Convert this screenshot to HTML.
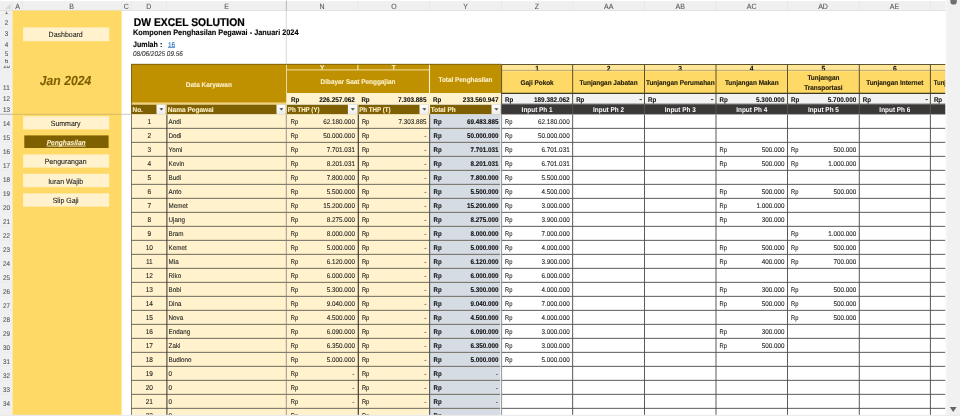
<!DOCTYPE html>
<html lang="id"><head><meta charset="utf-8"><title>DW EXCEL SOLUTION - Penghasilan</title>
<style>
html,body{margin:0;padding:0;background:#fff;overflow:hidden}
body{width:960px;height:416px}
svg{display:block;font-family:"Liberation Sans",sans-serif;will-change:transform;transform:translateZ(0)}
text{white-space:pre}
</style></head><body>
<svg width="960" height="416" viewBox="0 0 960 416" text-rendering="geometricPrecision">
<rect x="0.00" y="0.00" width="960.00" height="416.00" fill="#ffffff" />
<rect x="0.00" y="1.10" width="945.70" height="9.30" fill="#F0F0F0" />
<rect x="0.00" y="10.50" width="12.50" height="405.50" fill="#F0F0F0" />
<line x1="0.00" y1="10.40" x2="945.70" y2="10.40" stroke="#cfcfcf" stroke-width="0.6" />
<polygon points="10.9,3.4 10.9,9.1 5.0,9.1" fill="#d9d9d9"/>
<rect x="12.50" y="10.50" width="109.10" height="405.50" fill="#FFD966" />
<text transform="translate(17.50 8.75) scale(0.92 1)" font-size="7.63" text-anchor="middle" fill="#555555"  stroke="#555555" stroke-width="0.09">A</text>
<text transform="translate(71.50 8.75) scale(0.92 1)" font-size="7.63" text-anchor="middle" fill="#555555"  stroke="#555555" stroke-width="0.09">B</text>
<text transform="translate(126.30 8.75) scale(0.92 1)" font-size="7.63" text-anchor="middle" fill="#555555"  stroke="#555555" stroke-width="0.09">C</text>
<text transform="translate(148.70 8.75) scale(0.92 1)" font-size="7.63" text-anchor="middle" fill="#555555"  stroke="#555555" stroke-width="0.09">D</text>
<text transform="translate(226.50 8.75) scale(0.92 1)" font-size="7.63" text-anchor="middle" fill="#555555"  stroke="#555555" stroke-width="0.09">E</text>
<text transform="translate(322.00 8.75) scale(0.92 1)" font-size="7.63" text-anchor="middle" fill="#555555"  stroke="#555555" stroke-width="0.09">N</text>
<text transform="translate(394.00 8.75) scale(0.92 1)" font-size="7.63" text-anchor="middle" fill="#555555"  stroke="#555555" stroke-width="0.09">O</text>
<text transform="translate(465.50 8.75) scale(0.92 1)" font-size="7.63" text-anchor="middle" fill="#555555"  stroke="#555555" stroke-width="0.09">Y</text>
<text transform="translate(537.00 8.75) scale(0.92 1)" font-size="7.63" text-anchor="middle" fill="#555555"  stroke="#555555" stroke-width="0.09">Z</text>
<text transform="translate(608.70 8.75) scale(0.92 1)" font-size="7.63" text-anchor="middle" fill="#555555"  stroke="#555555" stroke-width="0.09">AA</text>
<text transform="translate(680.20 8.75) scale(0.92 1)" font-size="7.63" text-anchor="middle" fill="#555555"  stroke="#555555" stroke-width="0.09">AB</text>
<text transform="translate(751.60 8.75) scale(0.92 1)" font-size="7.63" text-anchor="middle" fill="#555555"  stroke="#555555" stroke-width="0.09">AC</text>
<text transform="translate(823.00 8.75) scale(0.92 1)" font-size="7.63" text-anchor="middle" fill="#555555"  stroke="#555555" stroke-width="0.09">AD</text>
<text transform="translate(894.50 8.75) scale(0.92 1)" font-size="7.63" text-anchor="middle" fill="#555555"  stroke="#555555" stroke-width="0.09">AE</text>
<line x1="12.50" y1="1.50" x2="12.50" y2="10.20" stroke="#e2e2e2" stroke-width="0.6" />
<line x1="22.50" y1="1.50" x2="22.50" y2="10.20" stroke="#e2e2e2" stroke-width="0.6" />
<line x1="121.70" y1="1.50" x2="121.70" y2="10.20" stroke="#e2e2e2" stroke-width="0.6" />
<line x1="131.20" y1="1.50" x2="131.20" y2="10.20" stroke="#e2e2e2" stroke-width="0.6" />
<line x1="166.50" y1="1.50" x2="166.50" y2="10.20" stroke="#e2e2e2" stroke-width="0.6" />
<line x1="286.50" y1="1.50" x2="286.50" y2="10.20" stroke="#e2e2e2" stroke-width="0.6" />
<line x1="357.90" y1="1.50" x2="357.90" y2="10.20" stroke="#e2e2e2" stroke-width="0.6" />
<line x1="429.50" y1="1.50" x2="429.50" y2="10.20" stroke="#e2e2e2" stroke-width="0.6" />
<line x1="501.60" y1="1.50" x2="501.60" y2="10.20" stroke="#e2e2e2" stroke-width="0.6" />
<line x1="572.65" y1="1.50" x2="572.65" y2="10.20" stroke="#e2e2e2" stroke-width="0.6" />
<line x1="644.50" y1="1.50" x2="644.50" y2="10.20" stroke="#e2e2e2" stroke-width="0.6" />
<line x1="716.00" y1="1.50" x2="716.00" y2="10.20" stroke="#e2e2e2" stroke-width="0.6" />
<line x1="787.50" y1="1.50" x2="787.50" y2="10.20" stroke="#e2e2e2" stroke-width="0.6" />
<line x1="859.30" y1="1.50" x2="859.30" y2="10.20" stroke="#e2e2e2" stroke-width="0.6" />
<line x1="930.40" y1="1.50" x2="930.40" y2="10.20" stroke="#e2e2e2" stroke-width="0.6" />
<text transform="translate(6.40 24.87) scale(0.92 1)" font-size="6.87" text-anchor="middle" fill="#555555"  stroke="#555555" stroke-width="0.09">2</text>
<text transform="translate(6.40 35.77) scale(0.92 1)" font-size="6.87" text-anchor="middle" fill="#555555"  stroke="#555555" stroke-width="0.09">3</text>
<text transform="translate(6.40 46.87) scale(0.92 1)" font-size="6.87" text-anchor="middle" fill="#555555"  stroke="#555555" stroke-width="0.09">4</text>
<text transform="translate(6.40 56.07) scale(0.92 1)" font-size="6.87" text-anchor="middle" fill="#555555"  stroke="#555555" stroke-width="0.09">5</text>
<text transform="translate(6.40 89.77) scale(0.92 1)" font-size="6.87" text-anchor="middle" fill="#555555"  stroke="#555555" stroke-width="0.09">11</text>
<text transform="translate(6.40 101.27) scale(0.92 1)" font-size="6.87" text-anchor="middle" fill="#555555"  stroke="#555555" stroke-width="0.09">12</text>
<text transform="translate(6.40 111.67) scale(0.92 1)" font-size="6.87" text-anchor="middle" fill="#555555"  stroke="#555555" stroke-width="0.09">13</text>
<text transform="translate(6.40 125.67) scale(0.92 1)" font-size="6.87" text-anchor="middle" fill="#555555"  stroke="#555555" stroke-width="0.09">14</text>
<text transform="translate(6.40 139.67) scale(0.92 1)" font-size="6.87" text-anchor="middle" fill="#555555"  stroke="#555555" stroke-width="0.09">15</text>
<text transform="translate(6.40 153.67) scale(0.92 1)" font-size="6.87" text-anchor="middle" fill="#555555"  stroke="#555555" stroke-width="0.09">16</text>
<text transform="translate(6.40 167.67) scale(0.92 1)" font-size="6.87" text-anchor="middle" fill="#555555"  stroke="#555555" stroke-width="0.09">17</text>
<text transform="translate(6.40 181.67) scale(0.92 1)" font-size="6.87" text-anchor="middle" fill="#555555"  stroke="#555555" stroke-width="0.09">18</text>
<text transform="translate(6.40 195.67) scale(0.92 1)" font-size="6.87" text-anchor="middle" fill="#555555"  stroke="#555555" stroke-width="0.09">19</text>
<text transform="translate(6.40 209.67) scale(0.92 1)" font-size="6.87" text-anchor="middle" fill="#555555"  stroke="#555555" stroke-width="0.09">20</text>
<text transform="translate(6.40 223.67) scale(0.92 1)" font-size="6.87" text-anchor="middle" fill="#555555"  stroke="#555555" stroke-width="0.09">21</text>
<text transform="translate(6.40 237.67) scale(0.92 1)" font-size="6.87" text-anchor="middle" fill="#555555"  stroke="#555555" stroke-width="0.09">22</text>
<text transform="translate(6.40 251.67) scale(0.92 1)" font-size="6.87" text-anchor="middle" fill="#555555"  stroke="#555555" stroke-width="0.09">23</text>
<text transform="translate(6.40 265.67) scale(0.92 1)" font-size="6.87" text-anchor="middle" fill="#555555"  stroke="#555555" stroke-width="0.09">24</text>
<text transform="translate(6.40 279.67) scale(0.92 1)" font-size="6.87" text-anchor="middle" fill="#555555"  stroke="#555555" stroke-width="0.09">25</text>
<text transform="translate(6.40 293.67) scale(0.92 1)" font-size="6.87" text-anchor="middle" fill="#555555"  stroke="#555555" stroke-width="0.09">26</text>
<text transform="translate(6.40 307.67) scale(0.92 1)" font-size="6.87" text-anchor="middle" fill="#555555"  stroke="#555555" stroke-width="0.09">27</text>
<text transform="translate(6.40 321.67) scale(0.92 1)" font-size="6.87" text-anchor="middle" fill="#555555"  stroke="#555555" stroke-width="0.09">28</text>
<text transform="translate(6.40 335.67) scale(0.92 1)" font-size="6.87" text-anchor="middle" fill="#555555"  stroke="#555555" stroke-width="0.09">29</text>
<text transform="translate(6.40 349.67) scale(0.92 1)" font-size="6.87" text-anchor="middle" fill="#555555"  stroke="#555555" stroke-width="0.09">30</text>
<text transform="translate(6.40 363.67) scale(0.92 1)" font-size="6.87" text-anchor="middle" fill="#555555"  stroke="#555555" stroke-width="0.09">31</text>
<text transform="translate(6.40 377.67) scale(0.92 1)" font-size="6.87" text-anchor="middle" fill="#555555"  stroke="#555555" stroke-width="0.09">32</text>
<text transform="translate(6.40 391.67) scale(0.92 1)" font-size="6.87" text-anchor="middle" fill="#555555"  stroke="#555555" stroke-width="0.09">33</text>
<text transform="translate(6.40 405.67) scale(0.92 1)" font-size="6.87" text-anchor="middle" fill="#555555"  stroke="#555555" stroke-width="0.09">34</text>
<clipPath id="c1"><rect x="0" y="11.5" width="12.5" height="5"/></clipPath>
<clipPath id="c6"><rect x="0" y="59.3" width="12.5" height="6"/></clipPath>
<clipPath id="c10"><rect x="0" y="65.7" width="12.5" height="6"/></clipPath>
<g clip-path="url(#c1)"><text transform="translate(6.40 14.20) scale(0.92 1)" font-size="6.87" text-anchor="middle" fill="#555555"  stroke="#555555" stroke-width="0.09">1</text></g>
<g clip-path="url(#c6)"><text transform="translate(6.40 62.70) scale(0.92 1)" font-size="6.87" text-anchor="middle" fill="#555555"  stroke="#555555" stroke-width="0.09">6</text></g>
<g clip-path="url(#c10)"><text transform="translate(6.40 68.00) scale(0.92 1)" font-size="6.87" text-anchor="middle" fill="#555555"  stroke="#555555" stroke-width="0.09">10</text></g>
<line x1="0.00" y1="14.80" x2="12.50" y2="14.80" stroke="#e6e6e6" stroke-width="0.5" />
<line x1="0.00" y1="27.60" x2="12.50" y2="27.60" stroke="#e6e6e6" stroke-width="0.5" />
<line x1="0.00" y1="38.60" x2="12.50" y2="38.60" stroke="#e6e6e6" stroke-width="0.5" />
<line x1="0.00" y1="49.30" x2="12.50" y2="49.30" stroke="#e6e6e6" stroke-width="0.5" />
<line x1="0.00" y1="57.40" x2="12.50" y2="57.40" stroke="#e6e6e6" stroke-width="0.5" />
<line x1="0.00" y1="63.30" x2="12.50" y2="63.30" stroke="#e6e6e6" stroke-width="0.5" />
<line x1="0.00" y1="68.60" x2="12.50" y2="68.60" stroke="#e6e6e6" stroke-width="0.5" />
<line x1="0.00" y1="93.00" x2="12.50" y2="93.00" stroke="#e6e6e6" stroke-width="0.5" />
<line x1="0.00" y1="104.00" x2="12.50" y2="104.00" stroke="#e6e6e6" stroke-width="0.5" />
<line x1="0.00" y1="114.20" x2="12.50" y2="114.20" stroke="#e6e6e6" stroke-width="0.5" />
<line x1="0.00" y1="128.20" x2="12.50" y2="128.20" stroke="#e6e6e6" stroke-width="0.5" />
<line x1="0.00" y1="142.20" x2="12.50" y2="142.20" stroke="#e6e6e6" stroke-width="0.5" />
<line x1="0.00" y1="156.20" x2="12.50" y2="156.20" stroke="#e6e6e6" stroke-width="0.5" />
<line x1="0.00" y1="170.20" x2="12.50" y2="170.20" stroke="#e6e6e6" stroke-width="0.5" />
<line x1="0.00" y1="184.20" x2="12.50" y2="184.20" stroke="#e6e6e6" stroke-width="0.5" />
<line x1="0.00" y1="198.20" x2="12.50" y2="198.20" stroke="#e6e6e6" stroke-width="0.5" />
<line x1="0.00" y1="212.20" x2="12.50" y2="212.20" stroke="#e6e6e6" stroke-width="0.5" />
<line x1="0.00" y1="226.20" x2="12.50" y2="226.20" stroke="#e6e6e6" stroke-width="0.5" />
<line x1="0.00" y1="240.20" x2="12.50" y2="240.20" stroke="#e6e6e6" stroke-width="0.5" />
<line x1="0.00" y1="254.20" x2="12.50" y2="254.20" stroke="#e6e6e6" stroke-width="0.5" />
<line x1="0.00" y1="268.20" x2="12.50" y2="268.20" stroke="#e6e6e6" stroke-width="0.5" />
<line x1="0.00" y1="282.20" x2="12.50" y2="282.20" stroke="#e6e6e6" stroke-width="0.5" />
<line x1="0.00" y1="296.20" x2="12.50" y2="296.20" stroke="#e6e6e6" stroke-width="0.5" />
<line x1="0.00" y1="310.20" x2="12.50" y2="310.20" stroke="#e6e6e6" stroke-width="0.5" />
<line x1="0.00" y1="324.20" x2="12.50" y2="324.20" stroke="#e6e6e6" stroke-width="0.5" />
<line x1="0.00" y1="338.20" x2="12.50" y2="338.20" stroke="#e6e6e6" stroke-width="0.5" />
<line x1="0.00" y1="352.20" x2="12.50" y2="352.20" stroke="#e6e6e6" stroke-width="0.5" />
<line x1="0.00" y1="366.20" x2="12.50" y2="366.20" stroke="#e6e6e6" stroke-width="0.5" />
<line x1="0.00" y1="380.20" x2="12.50" y2="380.20" stroke="#e6e6e6" stroke-width="0.5" />
<line x1="0.00" y1="394.20" x2="12.50" y2="394.20" stroke="#e6e6e6" stroke-width="0.5" />
<line x1="0.00" y1="408.20" x2="12.50" y2="408.20" stroke="#e6e6e6" stroke-width="0.5" />
<rect x="23.10" y="27.40" width="86.10" height="13.80" fill="#FFF2CC" />
<text transform="translate(65.65 37.23) scale(0.92 1)" font-size="7.58" text-anchor="middle" fill="#1c1c1c"  stroke="#1c1c1c" stroke-width="0.09">Dashboard</text>
<rect x="23.10" y="116.30" width="86.10" height="13.10" fill="#FFF2CC" />
<text transform="translate(65.65 126.18) scale(0.92 1)" font-size="7.58" text-anchor="middle" fill="#1c1c1c"  stroke="#1c1c1c" stroke-width="0.09">Summary</text>
<rect x="24.30" y="135.40" width="84.30" height="12.60" fill="#7F6000" />
<text transform="translate(66.15 144.69) scale(0.92 1)" font-size="7.19" text-anchor="middle" font-weight="bold" font-style="italic" fill="#FFF2CC" text-decoration="underline" stroke="#FFF2CC" stroke-width="0.09">Penghasilan</text>
<rect x="23.10" y="154.40" width="86.10" height="13.20" fill="#FFF2CC" />
<text transform="translate(65.65 164.13) scale(0.92 1)" font-size="7.58" text-anchor="middle" fill="#1c1c1c"  stroke="#1c1c1c" stroke-width="0.09">Pengurangan</text>
<rect x="23.10" y="173.80" width="86.10" height="13.40" fill="#FFF2CC" />
<text transform="translate(65.65 183.53) scale(0.92 1)" font-size="7.58" text-anchor="middle" fill="#1c1c1c"  stroke="#1c1c1c" stroke-width="0.09">Iuran Wajib</text>
<rect x="23.10" y="193.40" width="86.10" height="13.20" fill="#FFF2CC" />
<text transform="translate(65.65 202.93) scale(0.92 1)" font-size="7.58" text-anchor="middle" fill="#1c1c1c"  stroke="#1c1c1c" stroke-width="0.09">Slip Gaji</text>
<text transform="translate(65.50 84.75) scale(0.92 1)" font-size="13.19" text-anchor="middle" font-weight="bold" font-style="italic" fill="#7F6000"  stroke="#7F6000" stroke-width="0.09">Jan 2024</text>
<text transform="translate(133.80 25.80) scale(0.92 1)" font-size="11.28" font-weight="bold" fill="#000" stroke="#000" stroke-width="0.22">DW EXCEL SOLUTION</text>
<text transform="translate(133.00 35.40) scale(0.92 1)" font-size="7.96" font-weight="bold" fill="#000" stroke="#000" stroke-width="0.12">Komponen Penghasilan Pegawai - Januari 2024</text>
<text transform="translate(133.00 46.60) scale(0.92 1)" font-size="7.74" font-weight="bold" fill="#000" stroke="#000" stroke-width="0.12">Jumlah :</text>
<text transform="translate(168.00 46.60) scale(0.92 1)" font-size="6.98" fill="#1f6fc0"  stroke="#1f6fc0" stroke-width="0.09">16</text>
<line x1="168.00" y1="47.50" x2="175.00" y2="47.50" stroke="#2a72c4" stroke-width="0.7" />
<text transform="translate(133.00 55.80) scale(0.92 1)" font-size="6.98" font-style="italic" fill="#333"  stroke="#333" stroke-width="0.09">08/06/2025 09.56</text>
<rect x="131.20" y="64.00" width="155.30" height="38.70" fill="#BF9000" />
<text transform="translate(208.85 87.11) scale(0.92 1)" font-size="6.98" text-anchor="middle" font-weight="bold" fill="#FFF2CC"  stroke="#FFF2CC" stroke-width="0.09">Data Karyawan</text>
<rect x="286.50" y="64.00" width="143.00" height="29.00" fill="#BF9000" />
<text transform="translate(358.00 84.11) scale(0.92 1)" font-size="6.98" text-anchor="middle" font-weight="bold" fill="#FFF2CC"  stroke="#FFF2CC" stroke-width="0.09">Dibayar Saat Penggajian</text>
<rect x="429.50" y="64.00" width="72.00" height="29.00" fill="#BF9000" />
<text transform="translate(465.50 81.89) scale(0.92 1)" font-size="6.92" text-anchor="middle" font-weight="bold" fill="#FFF2CC"  stroke="#FFF2CC" stroke-width="0.09">Total Penghasilan</text>
<clipPath id="cy"><rect x="286" y="64.6" width="144" height="4.9"/></clipPath>
<g clip-path="url(#cy)"><text transform="translate(322.20 70.30) scale(0.92 1)" font-size="7.09" text-anchor="middle" font-weight="bold" fill="#FFF2CC"  stroke="#FFF2CC" stroke-width="0.09">Y</text></g>
<g clip-path="url(#cy)"><text transform="translate(393.70 70.30) scale(0.92 1)" font-size="7.09" text-anchor="middle" font-weight="bold" fill="#FFF2CC"  stroke="#FFF2CC" stroke-width="0.09">T</text></g>
<line x1="286.50" y1="69.90" x2="429.50" y2="69.90" stroke="#FFF2CC" stroke-width="0.8" />
<line x1="357.90" y1="64.50" x2="357.90" y2="69.90" stroke="#FFF2CC" stroke-width="1.0" />
<rect x="286.50" y="93.00" width="215.00" height="11.00" fill="#FFF2CC" />
<rect x="131.20" y="102.80" width="155.30" height="2.00" fill="#EFD27A" />
<rect x="131.20" y="104.70" width="370.30" height="9.70" fill="#7F6000" />
<line x1="429.50" y1="64.30" x2="429.50" y2="113.80" stroke="#FFF2CC" stroke-width="1.1" />
<line x1="286.50" y1="64.30" x2="286.50" y2="113.80" stroke="#E9DDB0" stroke-width="0.9" />
<line x1="357.90" y1="93.00" x2="357.90" y2="113.80" stroke="#FFF2CC" stroke-width="0.9" />
<line x1="166.50" y1="104.20" x2="166.50" y2="113.80" stroke="#DCCB94" stroke-width="0.9" />
<line x1="131.20" y1="64.30" x2="501.50" y2="64.30" stroke="#6f5608" stroke-width="0.8" />
<line x1="131.50" y1="64.00" x2="131.50" y2="113.80" stroke="#6f5608" stroke-width="0.8" />
<rect x="501.50" y="64.60" width="444.20" height="28.80" fill="#FFD966" />
<rect x="501.50" y="93.40" width="444.20" height="10.80" fill="#F2F2F2" />
<rect x="501.50" y="64.60" width="444.20" height="5.80" fill="#FFE699" />
<rect x="501.50" y="104.20" width="444.20" height="10.10" fill="#3B3838" />
<line x1="501.50" y1="64.50" x2="945.70" y2="64.50" stroke="#4a4220" stroke-width="0.9" />
<line x1="501.50" y1="70.40" x2="945.70" y2="70.40" stroke="#8c7a3a" stroke-width="0.8" />
<line x1="501.50" y1="70.90" x2="945.70" y2="70.90" stroke="#FFF2CC" stroke-width="0.5" />
<line x1="501.50" y1="93.40" x2="945.70" y2="93.40" stroke="#3f3a22" stroke-width="1.1" />
<line x1="501.50" y1="103.90" x2="945.70" y2="103.90" stroke="#6a6a6a" stroke-width="0.7" />
<clipPath id="cn"><rect x="501" y="65.0" width="445" height="5.2"/></clipPath>
<g clip-path="url(#cn)"><text transform="translate(537.12 71.20) scale(0.92 1)" font-size="7.41" text-anchor="middle" font-weight="bold" fill="#111"  stroke="#111" stroke-width="0.09">1</text></g>
<text transform="translate(537.12 84.81) scale(0.92 1)" font-size="6.98" text-anchor="middle" font-weight="bold" fill="#1e1a08" stroke="#1e1a08" stroke-width="0.12">Gaji Pokok</text>
<text transform="translate(537.12 112.11) scale(0.92 1)" font-size="6.98" text-anchor="middle" font-weight="bold" fill="#ffffff" >Input Ph 1</text>
<g clip-path="url(#cn)"><text transform="translate(608.58 71.20) scale(0.92 1)" font-size="7.41" text-anchor="middle" font-weight="bold" fill="#111"  stroke="#111" stroke-width="0.09">2</text></g>
<text transform="translate(608.58 84.81) scale(0.92 1)" font-size="6.98" text-anchor="middle" font-weight="bold" fill="#1e1a08" stroke="#1e1a08" stroke-width="0.12">Tunjangan Jabatan</text>
<text transform="translate(608.58 112.11) scale(0.92 1)" font-size="6.98" text-anchor="middle" font-weight="bold" fill="#ffffff" >Input Ph 2</text>
<g clip-path="url(#cn)"><text transform="translate(680.25 71.20) scale(0.92 1)" font-size="7.41" text-anchor="middle" font-weight="bold" fill="#111"  stroke="#111" stroke-width="0.09">3</text></g>
<text transform="translate(680.25 84.81) scale(0.92 1)" font-size="6.98" text-anchor="middle" font-weight="bold" fill="#1e1a08" stroke="#1e1a08" stroke-width="0.12">Tunjangan Perumahan</text>
<text transform="translate(680.25 112.11) scale(0.92 1)" font-size="6.98" text-anchor="middle" font-weight="bold" fill="#ffffff" >Input Ph 3</text>
<g clip-path="url(#cn)"><text transform="translate(751.75 71.20) scale(0.92 1)" font-size="7.41" text-anchor="middle" font-weight="bold" fill="#111"  stroke="#111" stroke-width="0.09">4</text></g>
<text transform="translate(751.75 84.81) scale(0.92 1)" font-size="6.98" text-anchor="middle" font-weight="bold" fill="#1e1a08" stroke="#1e1a08" stroke-width="0.12">Tunjangan Makan</text>
<text transform="translate(751.75 112.11) scale(0.92 1)" font-size="6.98" text-anchor="middle" font-weight="bold" fill="#ffffff" >Input Ph 4</text>
<g clip-path="url(#cn)"><text transform="translate(823.40 71.20) scale(0.92 1)" font-size="7.41" text-anchor="middle" font-weight="bold" fill="#111"  stroke="#111" stroke-width="0.09">5</text></g>
<text transform="translate(823.40 79.81) scale(0.92 1)" font-size="6.98" text-anchor="middle" font-weight="bold" fill="#1e1a08" stroke="#1e1a08" stroke-width="0.12">Tunjangan</text>
<text transform="translate(823.40 89.51) scale(0.92 1)" font-size="6.98" text-anchor="middle" font-weight="bold" fill="#1e1a08" stroke="#1e1a08" stroke-width="0.12">Transportasi</text>
<text transform="translate(823.40 112.11) scale(0.92 1)" font-size="6.98" text-anchor="middle" font-weight="bold" fill="#ffffff" >Input Ph 5</text>
<g clip-path="url(#cn)"><text transform="translate(894.85 71.20) scale(0.92 1)" font-size="7.41" text-anchor="middle" font-weight="bold" fill="#111"  stroke="#111" stroke-width="0.09">6</text></g>
<text transform="translate(894.85 84.81) scale(0.92 1)" font-size="6.98" text-anchor="middle" font-weight="bold" fill="#1e1a08" stroke="#1e1a08" stroke-width="0.12">Tunjangan Internet</text>
<text transform="translate(894.85 112.11) scale(0.92 1)" font-size="6.98" text-anchor="middle" font-weight="bold" fill="#ffffff" >Input Ph 6</text>
<clipPath id="caf"><rect x="930.4" y="60" width="15.30" height="60"/></clipPath>
<g clip-path="url(#caf)"><text transform="translate(933.80 84.51) scale(0.86 1)" font-size="6.98" font-weight="bold" fill="#2a2410"  stroke="#2a2410" stroke-width="0.09">Tunjangan</text></g>
<line x1="501.60" y1="64.50" x2="501.60" y2="104.00" stroke="#504a2c" stroke-width="0.95" />
<line x1="501.60" y1="104.00" x2="501.60" y2="113.80" stroke="#5a5858" stroke-width="0.8" />
<line x1="572.65" y1="64.50" x2="572.65" y2="104.00" stroke="#504a2c" stroke-width="0.95" />
<line x1="572.65" y1="104.00" x2="572.65" y2="113.80" stroke="#5a5858" stroke-width="0.8" />
<line x1="644.50" y1="64.50" x2="644.50" y2="104.00" stroke="#504a2c" stroke-width="0.95" />
<line x1="644.50" y1="104.00" x2="644.50" y2="113.80" stroke="#5a5858" stroke-width="0.8" />
<line x1="716.00" y1="64.50" x2="716.00" y2="104.00" stroke="#504a2c" stroke-width="0.95" />
<line x1="716.00" y1="104.00" x2="716.00" y2="113.80" stroke="#5a5858" stroke-width="0.8" />
<line x1="787.50" y1="64.50" x2="787.50" y2="104.00" stroke="#504a2c" stroke-width="0.95" />
<line x1="787.50" y1="104.00" x2="787.50" y2="113.80" stroke="#5a5858" stroke-width="0.8" />
<line x1="859.30" y1="64.50" x2="859.30" y2="104.00" stroke="#504a2c" stroke-width="0.95" />
<line x1="859.30" y1="104.00" x2="859.30" y2="113.80" stroke="#5a5858" stroke-width="0.8" />
<line x1="930.40" y1="64.50" x2="930.40" y2="104.00" stroke="#504a2c" stroke-width="0.95" />
<line x1="930.40" y1="104.00" x2="930.40" y2="113.80" stroke="#5a5858" stroke-width="0.8" />
<text transform="translate(291.00 101.57) scale(0.9 1)" font-size="6.87" font-weight="bold" fill="#111"  stroke="#111" stroke-width="0.09">Rp</text>
<text transform="translate(354.90 101.57) scale(0.935 1)" font-size="6.87" text-anchor="end" font-weight="bold" fill="#111"  stroke="#111" stroke-width="0.09">226.257.062</text>
<text transform="translate(361.40 101.57) scale(0.9 1)" font-size="6.87" font-weight="bold" fill="#111"  stroke="#111" stroke-width="0.09">Rp</text>
<text transform="translate(426.50 101.57) scale(0.935 1)" font-size="6.87" text-anchor="end" font-weight="bold" fill="#111"  stroke="#111" stroke-width="0.09">7.303.885</text>
<text transform="translate(433.00 101.57) scale(0.9 1)" font-size="6.87" font-weight="bold" fill="#111"  stroke="#111" stroke-width="0.09">Rp</text>
<text transform="translate(498.50 101.57) scale(0.935 1)" font-size="6.87" text-anchor="end" font-weight="bold" fill="#111"  stroke="#111" stroke-width="0.09">233.560.947</text>
<text transform="translate(505.10 101.87) scale(0.9 1)" font-size="6.87" font-weight="bold" fill="#111"  stroke="#111" stroke-width="0.09">Rp</text>
<text transform="translate(569.65 101.87) scale(0.935 1)" font-size="6.87" text-anchor="end" font-weight="bold" fill="#111"  stroke="#111" stroke-width="0.09">189.382.062</text>
<text transform="translate(576.15 101.87) scale(0.9 1)" font-size="6.87" font-weight="bold" fill="#111"  stroke="#111" stroke-width="0.09">Rp</text>
<text transform="translate(642.20 102.49) scale(1.0 1)" font-size="8.58" text-anchor="end" fill="#000"  stroke="#000" stroke-width="0.09">-</text>
<text transform="translate(648.00 101.87) scale(0.9 1)" font-size="6.87" font-weight="bold" fill="#111"  stroke="#111" stroke-width="0.09">Rp</text>
<text transform="translate(713.70 102.49) scale(1.0 1)" font-size="8.58" text-anchor="end" fill="#000"  stroke="#000" stroke-width="0.09">-</text>
<text transform="translate(719.50 101.87) scale(0.9 1)" font-size="6.87" font-weight="bold" fill="#111"  stroke="#111" stroke-width="0.09">Rp</text>
<text transform="translate(784.50 101.87) scale(0.935 1)" font-size="6.87" text-anchor="end" font-weight="bold" fill="#111"  stroke="#111" stroke-width="0.09">5.300.000</text>
<text transform="translate(791.00 101.87) scale(0.9 1)" font-size="6.87" font-weight="bold" fill="#111"  stroke="#111" stroke-width="0.09">Rp</text>
<text transform="translate(856.30 101.87) scale(0.935 1)" font-size="6.87" text-anchor="end" font-weight="bold" fill="#111"  stroke="#111" stroke-width="0.09">5.700.000</text>
<text transform="translate(862.80 101.87) scale(0.9 1)" font-size="6.87" font-weight="bold" fill="#111"  stroke="#111" stroke-width="0.09">Rp</text>
<text transform="translate(928.10 102.49) scale(1.0 1)" font-size="8.58" text-anchor="end" fill="#000"  stroke="#000" stroke-width="0.09">-</text>
<text transform="translate(933.90 101.87) scale(0.9 1)" font-size="6.87" font-weight="bold" fill="#111"  stroke="#111" stroke-width="0.09">Rp</text>
<text transform="translate(132.50 112.21) scale(0.92 1)" font-size="6.98" font-weight="bold" fill="#FFF2CC"  stroke="#FFF2CC" stroke-width="0.09">No.</text>
<text transform="translate(167.80 112.21) scale(0.94 1)" font-size="6.98" font-weight="bold" fill="#FFF2CC"  stroke="#FFF2CC" stroke-width="0.09">Nama Pegawai</text>
<text transform="translate(287.80 112.21) scale(0.885 1)" font-size="6.98" font-weight="bold" fill="#FFF2CC"  stroke="#FFF2CC" stroke-width="0.09">Ph THP (Y)</text>
<text transform="translate(359.20 112.21) scale(0.885 1)" font-size="6.98" font-weight="bold" fill="#FFF2CC"  stroke="#FFF2CC" stroke-width="0.09">Ph THP (T)</text>
<text transform="translate(430.80 112.21) scale(0.92 1)" font-size="6.98" font-weight="bold" fill="#FFF2CC"  stroke="#FFF2CC" stroke-width="0.09">Total Ph</text>
<linearGradient id="fb" x1="0" y1="0" x2="0" y2="1"><stop offset="0" stop-color="#ffffff"/><stop offset="1" stop-color="#ececec"/></linearGradient>
<rect x="156.50" y="104.50" width="9.30" height="9.80" fill="url(#fb)" />
<polygon points="159.40,108.3 163.40,108.3 161.40,110.6" fill="#44444c"/>
<rect x="276.50" y="104.50" width="9.30" height="9.80" fill="url(#fb)" />
<polygon points="279.40,108.3 283.40,108.3 281.40,110.6" fill="#44444c"/>
<rect x="347.90" y="104.50" width="9.30" height="9.80" fill="url(#fb)" />
<polygon points="350.80,108.3 354.80,108.3 352.80,110.6" fill="#44444c"/>
<rect x="419.50" y="104.50" width="9.30" height="9.80" fill="url(#fb)" />
<polygon points="422.40,108.3 426.40,108.3 424.40,110.6" fill="#44444c"/>
<rect x="491.50" y="104.50" width="9.30" height="9.80" fill="url(#fb)" />
<polygon points="494.40,108.3 498.40,108.3 496.40,110.6" fill="#44444c"/>
<rect x="131.20" y="114.40" width="298.30" height="301.80" fill="#FFF2CC" />
<rect x="429.50" y="114.40" width="72.00" height="301.80" fill="#D6DCE4" />
<text transform="translate(149.35 124.15) scale(0.92 1)" font-size="7.09" text-anchor="middle" fill="#1a1a1a"  stroke="#1a1a1a" stroke-width="0.09">1</text>
<text transform="translate(168.60 124.05) scale(0.92 1)" font-size="6.81" fill="#1a1a1a"  stroke="#1a1a1a" stroke-width="0.09">Andi</text>
<text transform="translate(290.80 124.03) scale(0.86 1)" font-size="6.76" fill="#1a1a1a"  stroke="#1a1a1a" stroke-width="0.09">Rp</text>
<text transform="translate(354.90 124.03) scale(0.935 1)" font-size="6.76" text-anchor="end" fill="#1a1a1a"  stroke="#1a1a1a" stroke-width="0.09">62.180.000</text>
<text transform="translate(361.90 124.03) scale(0.86 1)" font-size="6.76" fill="#1a1a1a"  stroke="#1a1a1a" stroke-width="0.09">Rp</text>
<text transform="translate(426.50 124.03) scale(0.935 1)" font-size="6.76" text-anchor="end" fill="#1a1a1a"  stroke="#1a1a1a" stroke-width="0.09">7.303.885</text>
<text transform="translate(433.60 124.03) scale(0.9 1)" font-size="6.76" font-weight="bold" fill="#111"  stroke="#111" stroke-width="0.09">Rp</text>
<text transform="translate(498.50 124.03) scale(0.935 1)" font-size="6.76" text-anchor="end" font-weight="bold" fill="#111"  stroke="#111" stroke-width="0.09">69.483.885</text>
<text transform="translate(505.10 124.03) scale(0.86 1)" font-size="6.76" fill="#1a1a1a"  stroke="#1a1a1a" stroke-width="0.09">Rp</text>
<text transform="translate(569.65 124.03) scale(0.935 1)" font-size="6.76" text-anchor="end" fill="#1a1a1a"  stroke="#1a1a1a" stroke-width="0.09">62.180.000</text>
<text transform="translate(149.35 138.15) scale(0.92 1)" font-size="7.09" text-anchor="middle" fill="#1a1a1a"  stroke="#1a1a1a" stroke-width="0.09">2</text>
<text transform="translate(168.60 138.05) scale(0.92 1)" font-size="6.81" fill="#1a1a1a"  stroke="#1a1a1a" stroke-width="0.09">Dodi</text>
<text transform="translate(290.80 138.03) scale(0.86 1)" font-size="6.76" fill="#1a1a1a"  stroke="#1a1a1a" stroke-width="0.09">Rp</text>
<text transform="translate(354.90 138.03) scale(0.935 1)" font-size="6.76" text-anchor="end" fill="#1a1a1a"  stroke="#1a1a1a" stroke-width="0.09">50.000.000</text>
<text transform="translate(361.90 138.03) scale(0.86 1)" font-size="6.76" fill="#1a1a1a"  stroke="#1a1a1a" stroke-width="0.09">Rp</text>
<text transform="translate(426.60 138.03) scale(1.0 1)" font-size="6.76" text-anchor="end" fill="#111"  stroke="#111" stroke-width="0.09">-</text>
<text transform="translate(433.60 138.03) scale(0.9 1)" font-size="6.76" font-weight="bold" fill="#111"  stroke="#111" stroke-width="0.09">Rp</text>
<text transform="translate(498.50 138.03) scale(0.935 1)" font-size="6.76" text-anchor="end" font-weight="bold" fill="#111"  stroke="#111" stroke-width="0.09">50.000.000</text>
<text transform="translate(505.10 138.03) scale(0.86 1)" font-size="6.76" fill="#1a1a1a"  stroke="#1a1a1a" stroke-width="0.09">Rp</text>
<text transform="translate(569.65 138.03) scale(0.935 1)" font-size="6.76" text-anchor="end" fill="#1a1a1a"  stroke="#1a1a1a" stroke-width="0.09">50.000.000</text>
<text transform="translate(149.35 152.15) scale(0.92 1)" font-size="7.09" text-anchor="middle" fill="#1a1a1a"  stroke="#1a1a1a" stroke-width="0.09">3</text>
<text transform="translate(168.60 152.05) scale(0.92 1)" font-size="6.81" fill="#1a1a1a"  stroke="#1a1a1a" stroke-width="0.09">Yomi</text>
<text transform="translate(290.80 152.03) scale(0.86 1)" font-size="6.76" fill="#1a1a1a"  stroke="#1a1a1a" stroke-width="0.09">Rp</text>
<text transform="translate(354.90 152.03) scale(0.935 1)" font-size="6.76" text-anchor="end" fill="#1a1a1a"  stroke="#1a1a1a" stroke-width="0.09">7.701.031</text>
<text transform="translate(361.90 152.03) scale(0.86 1)" font-size="6.76" fill="#1a1a1a"  stroke="#1a1a1a" stroke-width="0.09">Rp</text>
<text transform="translate(426.60 152.03) scale(1.0 1)" font-size="6.76" text-anchor="end" fill="#111"  stroke="#111" stroke-width="0.09">-</text>
<text transform="translate(433.60 152.03) scale(0.9 1)" font-size="6.76" font-weight="bold" fill="#111"  stroke="#111" stroke-width="0.09">Rp</text>
<text transform="translate(498.50 152.03) scale(0.935 1)" font-size="6.76" text-anchor="end" font-weight="bold" fill="#111"  stroke="#111" stroke-width="0.09">7.701.031</text>
<text transform="translate(505.10 152.03) scale(0.86 1)" font-size="6.76" fill="#1a1a1a"  stroke="#1a1a1a" stroke-width="0.09">Rp</text>
<text transform="translate(569.65 152.03) scale(0.935 1)" font-size="6.76" text-anchor="end" fill="#1a1a1a"  stroke="#1a1a1a" stroke-width="0.09">6.701.031</text>
<text transform="translate(719.50 152.03) scale(0.86 1)" font-size="6.76" fill="#1a1a1a"  stroke="#1a1a1a" stroke-width="0.09">Rp</text>
<text transform="translate(784.50 152.03) scale(0.935 1)" font-size="6.76" text-anchor="end" fill="#1a1a1a"  stroke="#1a1a1a" stroke-width="0.09">500.000</text>
<text transform="translate(791.00 152.03) scale(0.86 1)" font-size="6.76" fill="#1a1a1a"  stroke="#1a1a1a" stroke-width="0.09">Rp</text>
<text transform="translate(856.30 152.03) scale(0.935 1)" font-size="6.76" text-anchor="end" fill="#1a1a1a"  stroke="#1a1a1a" stroke-width="0.09">500.000</text>
<text transform="translate(149.35 166.15) scale(0.92 1)" font-size="7.09" text-anchor="middle" fill="#1a1a1a"  stroke="#1a1a1a" stroke-width="0.09">4</text>
<text transform="translate(168.60 166.05) scale(0.92 1)" font-size="6.81" fill="#1a1a1a"  stroke="#1a1a1a" stroke-width="0.09">Kevin</text>
<text transform="translate(290.80 166.03) scale(0.86 1)" font-size="6.76" fill="#1a1a1a"  stroke="#1a1a1a" stroke-width="0.09">Rp</text>
<text transform="translate(354.90 166.03) scale(0.935 1)" font-size="6.76" text-anchor="end" fill="#1a1a1a"  stroke="#1a1a1a" stroke-width="0.09">8.201.031</text>
<text transform="translate(361.90 166.03) scale(0.86 1)" font-size="6.76" fill="#1a1a1a"  stroke="#1a1a1a" stroke-width="0.09">Rp</text>
<text transform="translate(426.60 166.03) scale(1.0 1)" font-size="6.76" text-anchor="end" fill="#111"  stroke="#111" stroke-width="0.09">-</text>
<text transform="translate(433.60 166.03) scale(0.9 1)" font-size="6.76" font-weight="bold" fill="#111"  stroke="#111" stroke-width="0.09">Rp</text>
<text transform="translate(498.50 166.03) scale(0.935 1)" font-size="6.76" text-anchor="end" font-weight="bold" fill="#111"  stroke="#111" stroke-width="0.09">8.201.031</text>
<text transform="translate(505.10 166.03) scale(0.86 1)" font-size="6.76" fill="#1a1a1a"  stroke="#1a1a1a" stroke-width="0.09">Rp</text>
<text transform="translate(569.65 166.03) scale(0.935 1)" font-size="6.76" text-anchor="end" fill="#1a1a1a"  stroke="#1a1a1a" stroke-width="0.09">6.701.031</text>
<text transform="translate(719.50 166.03) scale(0.86 1)" font-size="6.76" fill="#1a1a1a"  stroke="#1a1a1a" stroke-width="0.09">Rp</text>
<text transform="translate(784.50 166.03) scale(0.935 1)" font-size="6.76" text-anchor="end" fill="#1a1a1a"  stroke="#1a1a1a" stroke-width="0.09">500.000</text>
<text transform="translate(791.00 166.03) scale(0.86 1)" font-size="6.76" fill="#1a1a1a"  stroke="#1a1a1a" stroke-width="0.09">Rp</text>
<text transform="translate(856.30 166.03) scale(0.935 1)" font-size="6.76" text-anchor="end" fill="#1a1a1a"  stroke="#1a1a1a" stroke-width="0.09">1.000.000</text>
<text transform="translate(149.35 180.15) scale(0.92 1)" font-size="7.09" text-anchor="middle" fill="#1a1a1a"  stroke="#1a1a1a" stroke-width="0.09">5</text>
<text transform="translate(168.60 180.05) scale(0.92 1)" font-size="6.81" fill="#1a1a1a"  stroke="#1a1a1a" stroke-width="0.09">Budi</text>
<text transform="translate(290.80 180.03) scale(0.86 1)" font-size="6.76" fill="#1a1a1a"  stroke="#1a1a1a" stroke-width="0.09">Rp</text>
<text transform="translate(354.90 180.03) scale(0.935 1)" font-size="6.76" text-anchor="end" fill="#1a1a1a"  stroke="#1a1a1a" stroke-width="0.09">7.800.000</text>
<text transform="translate(361.90 180.03) scale(0.86 1)" font-size="6.76" fill="#1a1a1a"  stroke="#1a1a1a" stroke-width="0.09">Rp</text>
<text transform="translate(426.60 180.03) scale(1.0 1)" font-size="6.76" text-anchor="end" fill="#111"  stroke="#111" stroke-width="0.09">-</text>
<text transform="translate(433.60 180.03) scale(0.9 1)" font-size="6.76" font-weight="bold" fill="#111"  stroke="#111" stroke-width="0.09">Rp</text>
<text transform="translate(498.50 180.03) scale(0.935 1)" font-size="6.76" text-anchor="end" font-weight="bold" fill="#111"  stroke="#111" stroke-width="0.09">7.800.000</text>
<text transform="translate(505.10 180.03) scale(0.86 1)" font-size="6.76" fill="#1a1a1a"  stroke="#1a1a1a" stroke-width="0.09">Rp</text>
<text transform="translate(569.65 180.03) scale(0.935 1)" font-size="6.76" text-anchor="end" fill="#1a1a1a"  stroke="#1a1a1a" stroke-width="0.09">5.500.000</text>
<text transform="translate(149.35 194.15) scale(0.92 1)" font-size="7.09" text-anchor="middle" fill="#1a1a1a"  stroke="#1a1a1a" stroke-width="0.09">6</text>
<text transform="translate(168.60 194.05) scale(0.92 1)" font-size="6.81" fill="#1a1a1a"  stroke="#1a1a1a" stroke-width="0.09">Anto</text>
<text transform="translate(290.80 194.03) scale(0.86 1)" font-size="6.76" fill="#1a1a1a"  stroke="#1a1a1a" stroke-width="0.09">Rp</text>
<text transform="translate(354.90 194.03) scale(0.935 1)" font-size="6.76" text-anchor="end" fill="#1a1a1a"  stroke="#1a1a1a" stroke-width="0.09">5.500.000</text>
<text transform="translate(361.90 194.03) scale(0.86 1)" font-size="6.76" fill="#1a1a1a"  stroke="#1a1a1a" stroke-width="0.09">Rp</text>
<text transform="translate(426.60 194.03) scale(1.0 1)" font-size="6.76" text-anchor="end" fill="#111"  stroke="#111" stroke-width="0.09">-</text>
<text transform="translate(433.60 194.03) scale(0.9 1)" font-size="6.76" font-weight="bold" fill="#111"  stroke="#111" stroke-width="0.09">Rp</text>
<text transform="translate(498.50 194.03) scale(0.935 1)" font-size="6.76" text-anchor="end" font-weight="bold" fill="#111"  stroke="#111" stroke-width="0.09">5.500.000</text>
<text transform="translate(505.10 194.03) scale(0.86 1)" font-size="6.76" fill="#1a1a1a"  stroke="#1a1a1a" stroke-width="0.09">Rp</text>
<text transform="translate(569.65 194.03) scale(0.935 1)" font-size="6.76" text-anchor="end" fill="#1a1a1a"  stroke="#1a1a1a" stroke-width="0.09">4.500.000</text>
<text transform="translate(719.50 194.03) scale(0.86 1)" font-size="6.76" fill="#1a1a1a"  stroke="#1a1a1a" stroke-width="0.09">Rp</text>
<text transform="translate(784.50 194.03) scale(0.935 1)" font-size="6.76" text-anchor="end" fill="#1a1a1a"  stroke="#1a1a1a" stroke-width="0.09">500.000</text>
<text transform="translate(791.00 194.03) scale(0.86 1)" font-size="6.76" fill="#1a1a1a"  stroke="#1a1a1a" stroke-width="0.09">Rp</text>
<text transform="translate(856.30 194.03) scale(0.935 1)" font-size="6.76" text-anchor="end" fill="#1a1a1a"  stroke="#1a1a1a" stroke-width="0.09">500.000</text>
<text transform="translate(149.35 208.15) scale(0.92 1)" font-size="7.09" text-anchor="middle" fill="#1a1a1a"  stroke="#1a1a1a" stroke-width="0.09">7</text>
<text transform="translate(168.60 208.05) scale(0.92 1)" font-size="6.81" fill="#1a1a1a"  stroke="#1a1a1a" stroke-width="0.09">Memet</text>
<text transform="translate(290.80 208.03) scale(0.86 1)" font-size="6.76" fill="#1a1a1a"  stroke="#1a1a1a" stroke-width="0.09">Rp</text>
<text transform="translate(354.90 208.03) scale(0.935 1)" font-size="6.76" text-anchor="end" fill="#1a1a1a"  stroke="#1a1a1a" stroke-width="0.09">15.200.000</text>
<text transform="translate(361.90 208.03) scale(0.86 1)" font-size="6.76" fill="#1a1a1a"  stroke="#1a1a1a" stroke-width="0.09">Rp</text>
<text transform="translate(426.60 208.03) scale(1.0 1)" font-size="6.76" text-anchor="end" fill="#111"  stroke="#111" stroke-width="0.09">-</text>
<text transform="translate(433.60 208.03) scale(0.9 1)" font-size="6.76" font-weight="bold" fill="#111"  stroke="#111" stroke-width="0.09">Rp</text>
<text transform="translate(498.50 208.03) scale(0.935 1)" font-size="6.76" text-anchor="end" font-weight="bold" fill="#111"  stroke="#111" stroke-width="0.09">15.200.000</text>
<text transform="translate(505.10 208.03) scale(0.86 1)" font-size="6.76" fill="#1a1a1a"  stroke="#1a1a1a" stroke-width="0.09">Rp</text>
<text transform="translate(569.65 208.03) scale(0.935 1)" font-size="6.76" text-anchor="end" fill="#1a1a1a"  stroke="#1a1a1a" stroke-width="0.09">3.000.000</text>
<text transform="translate(719.50 208.03) scale(0.86 1)" font-size="6.76" fill="#1a1a1a"  stroke="#1a1a1a" stroke-width="0.09">Rp</text>
<text transform="translate(784.50 208.03) scale(0.935 1)" font-size="6.76" text-anchor="end" fill="#1a1a1a"  stroke="#1a1a1a" stroke-width="0.09">1.000.000</text>
<text transform="translate(149.35 222.15) scale(0.92 1)" font-size="7.09" text-anchor="middle" fill="#1a1a1a"  stroke="#1a1a1a" stroke-width="0.09">8</text>
<text transform="translate(168.60 222.05) scale(0.92 1)" font-size="6.81" fill="#1a1a1a"  stroke="#1a1a1a" stroke-width="0.09">Ujang</text>
<text transform="translate(290.80 222.03) scale(0.86 1)" font-size="6.76" fill="#1a1a1a"  stroke="#1a1a1a" stroke-width="0.09">Rp</text>
<text transform="translate(354.90 222.03) scale(0.935 1)" font-size="6.76" text-anchor="end" fill="#1a1a1a"  stroke="#1a1a1a" stroke-width="0.09">8.275.000</text>
<text transform="translate(361.90 222.03) scale(0.86 1)" font-size="6.76" fill="#1a1a1a"  stroke="#1a1a1a" stroke-width="0.09">Rp</text>
<text transform="translate(426.60 222.03) scale(1.0 1)" font-size="6.76" text-anchor="end" fill="#111"  stroke="#111" stroke-width="0.09">-</text>
<text transform="translate(433.60 222.03) scale(0.9 1)" font-size="6.76" font-weight="bold" fill="#111"  stroke="#111" stroke-width="0.09">Rp</text>
<text transform="translate(498.50 222.03) scale(0.935 1)" font-size="6.76" text-anchor="end" font-weight="bold" fill="#111"  stroke="#111" stroke-width="0.09">8.275.000</text>
<text transform="translate(505.10 222.03) scale(0.86 1)" font-size="6.76" fill="#1a1a1a"  stroke="#1a1a1a" stroke-width="0.09">Rp</text>
<text transform="translate(569.65 222.03) scale(0.935 1)" font-size="6.76" text-anchor="end" fill="#1a1a1a"  stroke="#1a1a1a" stroke-width="0.09">3.900.000</text>
<text transform="translate(719.50 222.03) scale(0.86 1)" font-size="6.76" fill="#1a1a1a"  stroke="#1a1a1a" stroke-width="0.09">Rp</text>
<text transform="translate(784.50 222.03) scale(0.935 1)" font-size="6.76" text-anchor="end" fill="#1a1a1a"  stroke="#1a1a1a" stroke-width="0.09">300.000</text>
<text transform="translate(149.35 236.15) scale(0.92 1)" font-size="7.09" text-anchor="middle" fill="#1a1a1a"  stroke="#1a1a1a" stroke-width="0.09">9</text>
<text transform="translate(168.60 236.05) scale(0.92 1)" font-size="6.81" fill="#1a1a1a"  stroke="#1a1a1a" stroke-width="0.09">Bram</text>
<text transform="translate(290.80 236.03) scale(0.86 1)" font-size="6.76" fill="#1a1a1a"  stroke="#1a1a1a" stroke-width="0.09">Rp</text>
<text transform="translate(354.90 236.03) scale(0.935 1)" font-size="6.76" text-anchor="end" fill="#1a1a1a"  stroke="#1a1a1a" stroke-width="0.09">8.000.000</text>
<text transform="translate(361.90 236.03) scale(0.86 1)" font-size="6.76" fill="#1a1a1a"  stroke="#1a1a1a" stroke-width="0.09">Rp</text>
<text transform="translate(426.60 236.03) scale(1.0 1)" font-size="6.76" text-anchor="end" fill="#111"  stroke="#111" stroke-width="0.09">-</text>
<text transform="translate(433.60 236.03) scale(0.9 1)" font-size="6.76" font-weight="bold" fill="#111"  stroke="#111" stroke-width="0.09">Rp</text>
<text transform="translate(498.50 236.03) scale(0.935 1)" font-size="6.76" text-anchor="end" font-weight="bold" fill="#111"  stroke="#111" stroke-width="0.09">8.000.000</text>
<text transform="translate(505.10 236.03) scale(0.86 1)" font-size="6.76" fill="#1a1a1a"  stroke="#1a1a1a" stroke-width="0.09">Rp</text>
<text transform="translate(569.65 236.03) scale(0.935 1)" font-size="6.76" text-anchor="end" fill="#1a1a1a"  stroke="#1a1a1a" stroke-width="0.09">7.000.000</text>
<text transform="translate(791.00 236.03) scale(0.86 1)" font-size="6.76" fill="#1a1a1a"  stroke="#1a1a1a" stroke-width="0.09">Rp</text>
<text transform="translate(856.30 236.03) scale(0.935 1)" font-size="6.76" text-anchor="end" fill="#1a1a1a"  stroke="#1a1a1a" stroke-width="0.09">1.000.000</text>
<text transform="translate(149.35 250.15) scale(0.92 1)" font-size="7.09" text-anchor="middle" fill="#1a1a1a"  stroke="#1a1a1a" stroke-width="0.09">10</text>
<text transform="translate(168.60 250.05) scale(0.92 1)" font-size="6.81" fill="#1a1a1a"  stroke="#1a1a1a" stroke-width="0.09">Kemet</text>
<text transform="translate(290.80 250.03) scale(0.86 1)" font-size="6.76" fill="#1a1a1a"  stroke="#1a1a1a" stroke-width="0.09">Rp</text>
<text transform="translate(354.90 250.03) scale(0.935 1)" font-size="6.76" text-anchor="end" fill="#1a1a1a"  stroke="#1a1a1a" stroke-width="0.09">5.000.000</text>
<text transform="translate(361.90 250.03) scale(0.86 1)" font-size="6.76" fill="#1a1a1a"  stroke="#1a1a1a" stroke-width="0.09">Rp</text>
<text transform="translate(426.60 250.03) scale(1.0 1)" font-size="6.76" text-anchor="end" fill="#111"  stroke="#111" stroke-width="0.09">-</text>
<text transform="translate(433.60 250.03) scale(0.9 1)" font-size="6.76" font-weight="bold" fill="#111"  stroke="#111" stroke-width="0.09">Rp</text>
<text transform="translate(498.50 250.03) scale(0.935 1)" font-size="6.76" text-anchor="end" font-weight="bold" fill="#111"  stroke="#111" stroke-width="0.09">5.000.000</text>
<text transform="translate(505.10 250.03) scale(0.86 1)" font-size="6.76" fill="#1a1a1a"  stroke="#1a1a1a" stroke-width="0.09">Rp</text>
<text transform="translate(569.65 250.03) scale(0.935 1)" font-size="6.76" text-anchor="end" fill="#1a1a1a"  stroke="#1a1a1a" stroke-width="0.09">4.000.000</text>
<text transform="translate(719.50 250.03) scale(0.86 1)" font-size="6.76" fill="#1a1a1a"  stroke="#1a1a1a" stroke-width="0.09">Rp</text>
<text transform="translate(784.50 250.03) scale(0.935 1)" font-size="6.76" text-anchor="end" fill="#1a1a1a"  stroke="#1a1a1a" stroke-width="0.09">500.000</text>
<text transform="translate(791.00 250.03) scale(0.86 1)" font-size="6.76" fill="#1a1a1a"  stroke="#1a1a1a" stroke-width="0.09">Rp</text>
<text transform="translate(856.30 250.03) scale(0.935 1)" font-size="6.76" text-anchor="end" fill="#1a1a1a"  stroke="#1a1a1a" stroke-width="0.09">500.000</text>
<text transform="translate(149.35 264.15) scale(0.92 1)" font-size="7.09" text-anchor="middle" fill="#1a1a1a"  stroke="#1a1a1a" stroke-width="0.09">11</text>
<text transform="translate(168.60 264.05) scale(0.92 1)" font-size="6.81" fill="#1a1a1a"  stroke="#1a1a1a" stroke-width="0.09">Mia</text>
<text transform="translate(290.80 264.03) scale(0.86 1)" font-size="6.76" fill="#1a1a1a"  stroke="#1a1a1a" stroke-width="0.09">Rp</text>
<text transform="translate(354.90 264.03) scale(0.935 1)" font-size="6.76" text-anchor="end" fill="#1a1a1a"  stroke="#1a1a1a" stroke-width="0.09">6.120.000</text>
<text transform="translate(361.90 264.03) scale(0.86 1)" font-size="6.76" fill="#1a1a1a"  stroke="#1a1a1a" stroke-width="0.09">Rp</text>
<text transform="translate(426.60 264.03) scale(1.0 1)" font-size="6.76" text-anchor="end" fill="#111"  stroke="#111" stroke-width="0.09">-</text>
<text transform="translate(433.60 264.03) scale(0.9 1)" font-size="6.76" font-weight="bold" fill="#111"  stroke="#111" stroke-width="0.09">Rp</text>
<text transform="translate(498.50 264.03) scale(0.935 1)" font-size="6.76" text-anchor="end" font-weight="bold" fill="#111"  stroke="#111" stroke-width="0.09">6.120.000</text>
<text transform="translate(505.10 264.03) scale(0.86 1)" font-size="6.76" fill="#1a1a1a"  stroke="#1a1a1a" stroke-width="0.09">Rp</text>
<text transform="translate(569.65 264.03) scale(0.935 1)" font-size="6.76" text-anchor="end" fill="#1a1a1a"  stroke="#1a1a1a" stroke-width="0.09">3.900.000</text>
<text transform="translate(719.50 264.03) scale(0.86 1)" font-size="6.76" fill="#1a1a1a"  stroke="#1a1a1a" stroke-width="0.09">Rp</text>
<text transform="translate(784.50 264.03) scale(0.935 1)" font-size="6.76" text-anchor="end" fill="#1a1a1a"  stroke="#1a1a1a" stroke-width="0.09">400.000</text>
<text transform="translate(791.00 264.03) scale(0.86 1)" font-size="6.76" fill="#1a1a1a"  stroke="#1a1a1a" stroke-width="0.09">Rp</text>
<text transform="translate(856.30 264.03) scale(0.935 1)" font-size="6.76" text-anchor="end" fill="#1a1a1a"  stroke="#1a1a1a" stroke-width="0.09">700.000</text>
<text transform="translate(149.35 278.15) scale(0.92 1)" font-size="7.09" text-anchor="middle" fill="#1a1a1a"  stroke="#1a1a1a" stroke-width="0.09">12</text>
<text transform="translate(168.60 278.05) scale(0.92 1)" font-size="6.81" fill="#1a1a1a"  stroke="#1a1a1a" stroke-width="0.09">Riko</text>
<text transform="translate(290.80 278.03) scale(0.86 1)" font-size="6.76" fill="#1a1a1a"  stroke="#1a1a1a" stroke-width="0.09">Rp</text>
<text transform="translate(354.90 278.03) scale(0.935 1)" font-size="6.76" text-anchor="end" fill="#1a1a1a"  stroke="#1a1a1a" stroke-width="0.09">6.000.000</text>
<text transform="translate(361.90 278.03) scale(0.86 1)" font-size="6.76" fill="#1a1a1a"  stroke="#1a1a1a" stroke-width="0.09">Rp</text>
<text transform="translate(426.60 278.03) scale(1.0 1)" font-size="6.76" text-anchor="end" fill="#111"  stroke="#111" stroke-width="0.09">-</text>
<text transform="translate(433.60 278.03) scale(0.9 1)" font-size="6.76" font-weight="bold" fill="#111"  stroke="#111" stroke-width="0.09">Rp</text>
<text transform="translate(498.50 278.03) scale(0.935 1)" font-size="6.76" text-anchor="end" font-weight="bold" fill="#111"  stroke="#111" stroke-width="0.09">6.000.000</text>
<text transform="translate(505.10 278.03) scale(0.86 1)" font-size="6.76" fill="#1a1a1a"  stroke="#1a1a1a" stroke-width="0.09">Rp</text>
<text transform="translate(569.65 278.03) scale(0.935 1)" font-size="6.76" text-anchor="end" fill="#1a1a1a"  stroke="#1a1a1a" stroke-width="0.09">6.000.000</text>
<text transform="translate(149.35 292.15) scale(0.92 1)" font-size="7.09" text-anchor="middle" fill="#1a1a1a"  stroke="#1a1a1a" stroke-width="0.09">13</text>
<text transform="translate(168.60 292.05) scale(0.92 1)" font-size="6.81" fill="#1a1a1a"  stroke="#1a1a1a" stroke-width="0.09">Bobi</text>
<text transform="translate(290.80 292.03) scale(0.86 1)" font-size="6.76" fill="#1a1a1a"  stroke="#1a1a1a" stroke-width="0.09">Rp</text>
<text transform="translate(354.90 292.03) scale(0.935 1)" font-size="6.76" text-anchor="end" fill="#1a1a1a"  stroke="#1a1a1a" stroke-width="0.09">5.300.000</text>
<text transform="translate(361.90 292.03) scale(0.86 1)" font-size="6.76" fill="#1a1a1a"  stroke="#1a1a1a" stroke-width="0.09">Rp</text>
<text transform="translate(426.60 292.03) scale(1.0 1)" font-size="6.76" text-anchor="end" fill="#111"  stroke="#111" stroke-width="0.09">-</text>
<text transform="translate(433.60 292.03) scale(0.9 1)" font-size="6.76" font-weight="bold" fill="#111"  stroke="#111" stroke-width="0.09">Rp</text>
<text transform="translate(498.50 292.03) scale(0.935 1)" font-size="6.76" text-anchor="end" font-weight="bold" fill="#111"  stroke="#111" stroke-width="0.09">5.300.000</text>
<text transform="translate(505.10 292.03) scale(0.86 1)" font-size="6.76" fill="#1a1a1a"  stroke="#1a1a1a" stroke-width="0.09">Rp</text>
<text transform="translate(569.65 292.03) scale(0.935 1)" font-size="6.76" text-anchor="end" fill="#1a1a1a"  stroke="#1a1a1a" stroke-width="0.09">4.000.000</text>
<text transform="translate(719.50 292.03) scale(0.86 1)" font-size="6.76" fill="#1a1a1a"  stroke="#1a1a1a" stroke-width="0.09">Rp</text>
<text transform="translate(784.50 292.03) scale(0.935 1)" font-size="6.76" text-anchor="end" fill="#1a1a1a"  stroke="#1a1a1a" stroke-width="0.09">300.000</text>
<text transform="translate(791.00 292.03) scale(0.86 1)" font-size="6.76" fill="#1a1a1a"  stroke="#1a1a1a" stroke-width="0.09">Rp</text>
<text transform="translate(856.30 292.03) scale(0.935 1)" font-size="6.76" text-anchor="end" fill="#1a1a1a"  stroke="#1a1a1a" stroke-width="0.09">500.000</text>
<text transform="translate(149.35 306.15) scale(0.92 1)" font-size="7.09" text-anchor="middle" fill="#1a1a1a"  stroke="#1a1a1a" stroke-width="0.09">14</text>
<text transform="translate(168.60 306.05) scale(0.92 1)" font-size="6.81" fill="#1a1a1a"  stroke="#1a1a1a" stroke-width="0.09">Dina</text>
<text transform="translate(290.80 306.03) scale(0.86 1)" font-size="6.76" fill="#1a1a1a"  stroke="#1a1a1a" stroke-width="0.09">Rp</text>
<text transform="translate(354.90 306.03) scale(0.935 1)" font-size="6.76" text-anchor="end" fill="#1a1a1a"  stroke="#1a1a1a" stroke-width="0.09">9.040.000</text>
<text transform="translate(361.90 306.03) scale(0.86 1)" font-size="6.76" fill="#1a1a1a"  stroke="#1a1a1a" stroke-width="0.09">Rp</text>
<text transform="translate(426.60 306.03) scale(1.0 1)" font-size="6.76" text-anchor="end" fill="#111"  stroke="#111" stroke-width="0.09">-</text>
<text transform="translate(433.60 306.03) scale(0.9 1)" font-size="6.76" font-weight="bold" fill="#111"  stroke="#111" stroke-width="0.09">Rp</text>
<text transform="translate(498.50 306.03) scale(0.935 1)" font-size="6.76" text-anchor="end" font-weight="bold" fill="#111"  stroke="#111" stroke-width="0.09">9.040.000</text>
<text transform="translate(505.10 306.03) scale(0.86 1)" font-size="6.76" fill="#1a1a1a"  stroke="#1a1a1a" stroke-width="0.09">Rp</text>
<text transform="translate(569.65 306.03) scale(0.935 1)" font-size="6.76" text-anchor="end" fill="#1a1a1a"  stroke="#1a1a1a" stroke-width="0.09">7.000.000</text>
<text transform="translate(719.50 306.03) scale(0.86 1)" font-size="6.76" fill="#1a1a1a"  stroke="#1a1a1a" stroke-width="0.09">Rp</text>
<text transform="translate(784.50 306.03) scale(0.935 1)" font-size="6.76" text-anchor="end" fill="#1a1a1a"  stroke="#1a1a1a" stroke-width="0.09">500.000</text>
<text transform="translate(791.00 306.03) scale(0.86 1)" font-size="6.76" fill="#1a1a1a"  stroke="#1a1a1a" stroke-width="0.09">Rp</text>
<text transform="translate(856.30 306.03) scale(0.935 1)" font-size="6.76" text-anchor="end" fill="#1a1a1a"  stroke="#1a1a1a" stroke-width="0.09">500.000</text>
<text transform="translate(149.35 320.15) scale(0.92 1)" font-size="7.09" text-anchor="middle" fill="#1a1a1a"  stroke="#1a1a1a" stroke-width="0.09">15</text>
<text transform="translate(168.60 320.05) scale(0.92 1)" font-size="6.81" fill="#1a1a1a"  stroke="#1a1a1a" stroke-width="0.09">Nova</text>
<text transform="translate(290.80 320.03) scale(0.86 1)" font-size="6.76" fill="#1a1a1a"  stroke="#1a1a1a" stroke-width="0.09">Rp</text>
<text transform="translate(354.90 320.03) scale(0.935 1)" font-size="6.76" text-anchor="end" fill="#1a1a1a"  stroke="#1a1a1a" stroke-width="0.09">4.500.000</text>
<text transform="translate(361.90 320.03) scale(0.86 1)" font-size="6.76" fill="#1a1a1a"  stroke="#1a1a1a" stroke-width="0.09">Rp</text>
<text transform="translate(426.60 320.03) scale(1.0 1)" font-size="6.76" text-anchor="end" fill="#111"  stroke="#111" stroke-width="0.09">-</text>
<text transform="translate(433.60 320.03) scale(0.9 1)" font-size="6.76" font-weight="bold" fill="#111"  stroke="#111" stroke-width="0.09">Rp</text>
<text transform="translate(498.50 320.03) scale(0.935 1)" font-size="6.76" text-anchor="end" font-weight="bold" fill="#111"  stroke="#111" stroke-width="0.09">4.500.000</text>
<text transform="translate(505.10 320.03) scale(0.86 1)" font-size="6.76" fill="#1a1a1a"  stroke="#1a1a1a" stroke-width="0.09">Rp</text>
<text transform="translate(569.65 320.03) scale(0.935 1)" font-size="6.76" text-anchor="end" fill="#1a1a1a"  stroke="#1a1a1a" stroke-width="0.09">4.000.000</text>
<text transform="translate(791.00 320.03) scale(0.86 1)" font-size="6.76" fill="#1a1a1a"  stroke="#1a1a1a" stroke-width="0.09">Rp</text>
<text transform="translate(856.30 320.03) scale(0.935 1)" font-size="6.76" text-anchor="end" fill="#1a1a1a"  stroke="#1a1a1a" stroke-width="0.09">500.000</text>
<text transform="translate(149.35 334.15) scale(0.92 1)" font-size="7.09" text-anchor="middle" fill="#1a1a1a"  stroke="#1a1a1a" stroke-width="0.09">16</text>
<text transform="translate(168.60 334.05) scale(0.92 1)" font-size="6.81" fill="#1a1a1a"  stroke="#1a1a1a" stroke-width="0.09">Endang</text>
<text transform="translate(290.80 334.03) scale(0.86 1)" font-size="6.76" fill="#1a1a1a"  stroke="#1a1a1a" stroke-width="0.09">Rp</text>
<text transform="translate(354.90 334.03) scale(0.935 1)" font-size="6.76" text-anchor="end" fill="#1a1a1a"  stroke="#1a1a1a" stroke-width="0.09">6.090.000</text>
<text transform="translate(361.90 334.03) scale(0.86 1)" font-size="6.76" fill="#1a1a1a"  stroke="#1a1a1a" stroke-width="0.09">Rp</text>
<text transform="translate(426.60 334.03) scale(1.0 1)" font-size="6.76" text-anchor="end" fill="#111"  stroke="#111" stroke-width="0.09">-</text>
<text transform="translate(433.60 334.03) scale(0.9 1)" font-size="6.76" font-weight="bold" fill="#111"  stroke="#111" stroke-width="0.09">Rp</text>
<text transform="translate(498.50 334.03) scale(0.935 1)" font-size="6.76" text-anchor="end" font-weight="bold" fill="#111"  stroke="#111" stroke-width="0.09">6.090.000</text>
<text transform="translate(505.10 334.03) scale(0.86 1)" font-size="6.76" fill="#1a1a1a"  stroke="#1a1a1a" stroke-width="0.09">Rp</text>
<text transform="translate(569.65 334.03) scale(0.935 1)" font-size="6.76" text-anchor="end" fill="#1a1a1a"  stroke="#1a1a1a" stroke-width="0.09">3.000.000</text>
<text transform="translate(719.50 334.03) scale(0.86 1)" font-size="6.76" fill="#1a1a1a"  stroke="#1a1a1a" stroke-width="0.09">Rp</text>
<text transform="translate(784.50 334.03) scale(0.935 1)" font-size="6.76" text-anchor="end" fill="#1a1a1a"  stroke="#1a1a1a" stroke-width="0.09">300.000</text>
<text transform="translate(149.35 348.15) scale(0.92 1)" font-size="7.09" text-anchor="middle" fill="#1a1a1a"  stroke="#1a1a1a" stroke-width="0.09">17</text>
<text transform="translate(168.60 348.05) scale(0.92 1)" font-size="6.81" fill="#1a1a1a"  stroke="#1a1a1a" stroke-width="0.09">Zaki</text>
<text transform="translate(290.80 348.03) scale(0.86 1)" font-size="6.76" fill="#1a1a1a"  stroke="#1a1a1a" stroke-width="0.09">Rp</text>
<text transform="translate(354.90 348.03) scale(0.935 1)" font-size="6.76" text-anchor="end" fill="#1a1a1a"  stroke="#1a1a1a" stroke-width="0.09">6.350.000</text>
<text transform="translate(361.90 348.03) scale(0.86 1)" font-size="6.76" fill="#1a1a1a"  stroke="#1a1a1a" stroke-width="0.09">Rp</text>
<text transform="translate(426.60 348.03) scale(1.0 1)" font-size="6.76" text-anchor="end" fill="#111"  stroke="#111" stroke-width="0.09">-</text>
<text transform="translate(433.60 348.03) scale(0.9 1)" font-size="6.76" font-weight="bold" fill="#111"  stroke="#111" stroke-width="0.09">Rp</text>
<text transform="translate(498.50 348.03) scale(0.935 1)" font-size="6.76" text-anchor="end" font-weight="bold" fill="#111"  stroke="#111" stroke-width="0.09">6.350.000</text>
<text transform="translate(505.10 348.03) scale(0.86 1)" font-size="6.76" fill="#1a1a1a"  stroke="#1a1a1a" stroke-width="0.09">Rp</text>
<text transform="translate(569.65 348.03) scale(0.935 1)" font-size="6.76" text-anchor="end" fill="#1a1a1a"  stroke="#1a1a1a" stroke-width="0.09">3.000.000</text>
<text transform="translate(719.50 348.03) scale(0.86 1)" font-size="6.76" fill="#1a1a1a"  stroke="#1a1a1a" stroke-width="0.09">Rp</text>
<text transform="translate(784.50 348.03) scale(0.935 1)" font-size="6.76" text-anchor="end" fill="#1a1a1a"  stroke="#1a1a1a" stroke-width="0.09">500.000</text>
<text transform="translate(149.35 362.15) scale(0.92 1)" font-size="7.09" text-anchor="middle" fill="#1a1a1a"  stroke="#1a1a1a" stroke-width="0.09">18</text>
<text transform="translate(168.60 362.05) scale(0.92 1)" font-size="6.81" fill="#1a1a1a"  stroke="#1a1a1a" stroke-width="0.09">Budiono</text>
<text transform="translate(290.80 362.03) scale(0.86 1)" font-size="6.76" fill="#1a1a1a"  stroke="#1a1a1a" stroke-width="0.09">Rp</text>
<text transform="translate(354.90 362.03) scale(0.935 1)" font-size="6.76" text-anchor="end" fill="#1a1a1a"  stroke="#1a1a1a" stroke-width="0.09">5.000.000</text>
<text transform="translate(361.90 362.03) scale(0.86 1)" font-size="6.76" fill="#1a1a1a"  stroke="#1a1a1a" stroke-width="0.09">Rp</text>
<text transform="translate(426.60 362.03) scale(1.0 1)" font-size="6.76" text-anchor="end" fill="#111"  stroke="#111" stroke-width="0.09">-</text>
<text transform="translate(433.60 362.03) scale(0.9 1)" font-size="6.76" font-weight="bold" fill="#111"  stroke="#111" stroke-width="0.09">Rp</text>
<text transform="translate(498.50 362.03) scale(0.935 1)" font-size="6.76" text-anchor="end" font-weight="bold" fill="#111"  stroke="#111" stroke-width="0.09">5.000.000</text>
<text transform="translate(505.10 362.03) scale(0.86 1)" font-size="6.76" fill="#1a1a1a"  stroke="#1a1a1a" stroke-width="0.09">Rp</text>
<text transform="translate(569.65 362.03) scale(0.935 1)" font-size="6.76" text-anchor="end" fill="#1a1a1a"  stroke="#1a1a1a" stroke-width="0.09">5.000.000</text>
<text transform="translate(149.35 376.15) scale(0.92 1)" font-size="7.09" text-anchor="middle" fill="#1a1a1a"  stroke="#1a1a1a" stroke-width="0.09">19</text>
<text transform="translate(168.60 376.05) scale(0.92 1)" font-size="6.81" fill="#1a1a1a"  stroke="#1a1a1a" stroke-width="0.09">0</text>
<text transform="translate(290.80 376.03) scale(0.86 1)" font-size="6.76" fill="#1a1a1a"  stroke="#1a1a1a" stroke-width="0.09">Rp</text>
<text transform="translate(354.50 376.03) scale(1.0 1)" font-size="6.76" text-anchor="end" fill="#111"  stroke="#111" stroke-width="0.09">-</text>
<text transform="translate(361.90 376.03) scale(0.86 1)" font-size="6.76" fill="#1a1a1a"  stroke="#1a1a1a" stroke-width="0.09">Rp</text>
<text transform="translate(426.60 376.03) scale(1.0 1)" font-size="6.76" text-anchor="end" fill="#111"  stroke="#111" stroke-width="0.09">-</text>
<text transform="translate(433.60 376.03) scale(0.9 1)" font-size="6.76" font-weight="bold" fill="#111"  stroke="#111" stroke-width="0.09">Rp</text>
<text transform="translate(498.10 376.03) scale(1.0 1)" font-size="6.76" text-anchor="end" fill="#111"  stroke="#111" stroke-width="0.09">-</text>
<text transform="translate(149.35 390.15) scale(0.92 1)" font-size="7.09" text-anchor="middle" fill="#1a1a1a"  stroke="#1a1a1a" stroke-width="0.09">20</text>
<text transform="translate(168.60 390.05) scale(0.92 1)" font-size="6.81" fill="#1a1a1a"  stroke="#1a1a1a" stroke-width="0.09">0</text>
<text transform="translate(290.80 390.03) scale(0.86 1)" font-size="6.76" fill="#1a1a1a"  stroke="#1a1a1a" stroke-width="0.09">Rp</text>
<text transform="translate(354.50 390.03) scale(1.0 1)" font-size="6.76" text-anchor="end" fill="#111"  stroke="#111" stroke-width="0.09">-</text>
<text transform="translate(361.90 390.03) scale(0.86 1)" font-size="6.76" fill="#1a1a1a"  stroke="#1a1a1a" stroke-width="0.09">Rp</text>
<text transform="translate(426.60 390.03) scale(1.0 1)" font-size="6.76" text-anchor="end" fill="#111"  stroke="#111" stroke-width="0.09">-</text>
<text transform="translate(433.60 390.03) scale(0.9 1)" font-size="6.76" font-weight="bold" fill="#111"  stroke="#111" stroke-width="0.09">Rp</text>
<text transform="translate(498.10 390.03) scale(1.0 1)" font-size="6.76" text-anchor="end" fill="#111"  stroke="#111" stroke-width="0.09">-</text>
<text transform="translate(149.35 404.15) scale(0.92 1)" font-size="7.09" text-anchor="middle" fill="#1a1a1a"  stroke="#1a1a1a" stroke-width="0.09">21</text>
<text transform="translate(168.60 404.05) scale(0.92 1)" font-size="6.81" fill="#1a1a1a"  stroke="#1a1a1a" stroke-width="0.09">0</text>
<text transform="translate(290.80 404.03) scale(0.86 1)" font-size="6.76" fill="#1a1a1a"  stroke="#1a1a1a" stroke-width="0.09">Rp</text>
<text transform="translate(354.50 404.03) scale(1.0 1)" font-size="6.76" text-anchor="end" fill="#111"  stroke="#111" stroke-width="0.09">-</text>
<text transform="translate(361.90 404.03) scale(0.86 1)" font-size="6.76" fill="#1a1a1a"  stroke="#1a1a1a" stroke-width="0.09">Rp</text>
<text transform="translate(426.60 404.03) scale(1.0 1)" font-size="6.76" text-anchor="end" fill="#111"  stroke="#111" stroke-width="0.09">-</text>
<text transform="translate(433.60 404.03) scale(0.9 1)" font-size="6.76" font-weight="bold" fill="#111"  stroke="#111" stroke-width="0.09">Rp</text>
<text transform="translate(498.10 404.03) scale(1.0 1)" font-size="6.76" text-anchor="end" fill="#111"  stroke="#111" stroke-width="0.09">-</text>
<text transform="translate(149.35 418.15) scale(0.92 1)" font-size="7.09" text-anchor="middle" fill="#1a1a1a"  stroke="#1a1a1a" stroke-width="0.09">22</text>
<text transform="translate(168.60 418.05) scale(0.92 1)" font-size="6.81" fill="#1a1a1a"  stroke="#1a1a1a" stroke-width="0.09">0</text>
<text transform="translate(290.80 418.03) scale(0.86 1)" font-size="6.76" fill="#1a1a1a"  stroke="#1a1a1a" stroke-width="0.09">Rp</text>
<text transform="translate(354.50 418.03) scale(1.0 1)" font-size="6.76" text-anchor="end" fill="#111"  stroke="#111" stroke-width="0.09">-</text>
<text transform="translate(361.90 418.03) scale(0.86 1)" font-size="6.76" fill="#1a1a1a"  stroke="#1a1a1a" stroke-width="0.09">Rp</text>
<text transform="translate(426.60 418.03) scale(1.0 1)" font-size="6.76" text-anchor="end" fill="#111"  stroke="#111" stroke-width="0.09">-</text>
<text transform="translate(433.60 418.03) scale(0.9 1)" font-size="6.76" font-weight="bold" fill="#111"  stroke="#111" stroke-width="0.09">Rp</text>
<text transform="translate(498.10 418.03) scale(1.0 1)" font-size="6.76" text-anchor="end" fill="#111"  stroke="#111" stroke-width="0.09">-</text>
<line x1="131.20" y1="128.35" x2="501.50" y2="128.35" stroke="#6e6a5e" stroke-width="1.0" />
<line x1="501.50" y1="128.35" x2="945.50" y2="128.35" stroke="#5a5a5a" stroke-width="1.0" />
<line x1="131.20" y1="142.35" x2="501.50" y2="142.35" stroke="#6e6a5e" stroke-width="1.0" />
<line x1="501.50" y1="142.35" x2="945.50" y2="142.35" stroke="#5a5a5a" stroke-width="1.0" />
<line x1="131.20" y1="156.35" x2="501.50" y2="156.35" stroke="#6e6a5e" stroke-width="1.0" />
<line x1="501.50" y1="156.35" x2="945.50" y2="156.35" stroke="#5a5a5a" stroke-width="1.0" />
<line x1="131.20" y1="170.35" x2="501.50" y2="170.35" stroke="#6e6a5e" stroke-width="1.0" />
<line x1="501.50" y1="170.35" x2="945.50" y2="170.35" stroke="#5a5a5a" stroke-width="1.0" />
<line x1="131.20" y1="184.35" x2="501.50" y2="184.35" stroke="#6e6a5e" stroke-width="1.0" />
<line x1="501.50" y1="184.35" x2="945.50" y2="184.35" stroke="#5a5a5a" stroke-width="1.0" />
<line x1="131.20" y1="198.35" x2="501.50" y2="198.35" stroke="#6e6a5e" stroke-width="1.0" />
<line x1="501.50" y1="198.35" x2="945.50" y2="198.35" stroke="#5a5a5a" stroke-width="1.0" />
<line x1="131.20" y1="212.35" x2="501.50" y2="212.35" stroke="#6e6a5e" stroke-width="1.0" />
<line x1="501.50" y1="212.35" x2="945.50" y2="212.35" stroke="#5a5a5a" stroke-width="1.0" />
<line x1="131.20" y1="226.35" x2="501.50" y2="226.35" stroke="#6e6a5e" stroke-width="1.0" />
<line x1="501.50" y1="226.35" x2="945.50" y2="226.35" stroke="#5a5a5a" stroke-width="1.0" />
<line x1="131.20" y1="240.35" x2="501.50" y2="240.35" stroke="#6e6a5e" stroke-width="1.0" />
<line x1="501.50" y1="240.35" x2="945.50" y2="240.35" stroke="#5a5a5a" stroke-width="1.0" />
<line x1="131.20" y1="254.35" x2="501.50" y2="254.35" stroke="#6e6a5e" stroke-width="1.0" />
<line x1="501.50" y1="254.35" x2="945.50" y2="254.35" stroke="#5a5a5a" stroke-width="1.0" />
<line x1="131.20" y1="268.35" x2="501.50" y2="268.35" stroke="#6e6a5e" stroke-width="1.0" />
<line x1="501.50" y1="268.35" x2="945.50" y2="268.35" stroke="#5a5a5a" stroke-width="1.0" />
<line x1="131.20" y1="282.35" x2="501.50" y2="282.35" stroke="#6e6a5e" stroke-width="1.0" />
<line x1="501.50" y1="282.35" x2="945.50" y2="282.35" stroke="#5a5a5a" stroke-width="1.0" />
<line x1="131.20" y1="296.35" x2="501.50" y2="296.35" stroke="#6e6a5e" stroke-width="1.0" />
<line x1="501.50" y1="296.35" x2="945.50" y2="296.35" stroke="#5a5a5a" stroke-width="1.0" />
<line x1="131.20" y1="310.35" x2="501.50" y2="310.35" stroke="#6e6a5e" stroke-width="1.0" />
<line x1="501.50" y1="310.35" x2="945.50" y2="310.35" stroke="#5a5a5a" stroke-width="1.0" />
<line x1="131.20" y1="324.35" x2="501.50" y2="324.35" stroke="#6e6a5e" stroke-width="1.0" />
<line x1="501.50" y1="324.35" x2="945.50" y2="324.35" stroke="#5a5a5a" stroke-width="1.0" />
<line x1="131.20" y1="338.35" x2="501.50" y2="338.35" stroke="#6e6a5e" stroke-width="1.0" />
<line x1="501.50" y1="338.35" x2="945.50" y2="338.35" stroke="#5a5a5a" stroke-width="1.0" />
<line x1="131.20" y1="352.35" x2="501.50" y2="352.35" stroke="#6e6a5e" stroke-width="1.0" />
<line x1="501.50" y1="352.35" x2="945.50" y2="352.35" stroke="#5a5a5a" stroke-width="1.0" />
<line x1="131.20" y1="366.35" x2="501.50" y2="366.35" stroke="#6e6a5e" stroke-width="1.0" />
<line x1="501.50" y1="366.35" x2="945.50" y2="366.35" stroke="#5a5a5a" stroke-width="1.0" />
<line x1="131.20" y1="380.35" x2="501.50" y2="380.35" stroke="#6e6a5e" stroke-width="1.0" />
<line x1="501.50" y1="380.35" x2="945.50" y2="380.35" stroke="#5a5a5a" stroke-width="1.0" />
<line x1="131.20" y1="394.35" x2="501.50" y2="394.35" stroke="#6e6a5e" stroke-width="1.0" />
<line x1="501.50" y1="394.35" x2="945.50" y2="394.35" stroke="#5a5a5a" stroke-width="1.0" />
<line x1="131.20" y1="408.35" x2="501.50" y2="408.35" stroke="#6e6a5e" stroke-width="1.0" />
<line x1="501.50" y1="408.35" x2="945.50" y2="408.35" stroke="#5a5a5a" stroke-width="1.0" />
<line x1="131.20" y1="422.35" x2="501.50" y2="422.35" stroke="#6e6a5e" stroke-width="1.0" />
<line x1="501.50" y1="422.35" x2="945.50" y2="422.35" stroke="#5a5a5a" stroke-width="1.0" />
<line x1="131.50" y1="114.20" x2="131.50" y2="416.00" stroke="#5e5a4e" stroke-width="0.8" />
<line x1="166.90" y1="114.40" x2="166.90" y2="416.00" stroke="#45423a" stroke-width="1.1" />
<line x1="286.30" y1="114.40" x2="286.30" y2="416.00" stroke="#858175" stroke-width="0.8" />
<line x1="358.30" y1="114.40" x2="358.30" y2="416.00" stroke="#3a372e" stroke-width="1.15" />
<line x1="429.60" y1="114.40" x2="429.60" y2="416.00" stroke="#5c5d61" stroke-width="1.15" />
<line x1="500.60" y1="114.40" x2="500.60" y2="416.00" stroke="#f2f4f7" stroke-width="0.9" />
<line x1="501.60" y1="114.40" x2="501.60" y2="416.00" stroke="#8c8c8c" stroke-width="0.9" />
<line x1="572.65" y1="114.40" x2="572.65" y2="416.00" stroke="#505050" stroke-width="0.95" />
<line x1="644.50" y1="114.40" x2="644.50" y2="416.00" stroke="#505050" stroke-width="0.95" />
<line x1="716.00" y1="114.40" x2="716.00" y2="416.00" stroke="#505050" stroke-width="0.95" />
<line x1="787.50" y1="114.40" x2="787.50" y2="416.00" stroke="#505050" stroke-width="0.95" />
<line x1="859.30" y1="114.40" x2="859.30" y2="416.00" stroke="#505050" stroke-width="0.95" />
<line x1="930.40" y1="114.40" x2="930.40" y2="416.00" stroke="#505050" stroke-width="0.95" />
<line x1="0.00" y1="114.30" x2="12.50" y2="114.30" stroke="#a0a0a0" stroke-width="0.7" />
<line x1="12.50" y1="114.30" x2="121.30" y2="114.30" stroke="#c2ad68" stroke-width="0.7" />
<line x1="121.30" y1="114.30" x2="131.20" y2="114.30" stroke="#b4b4b4" stroke-width="0.7" />
<line x1="501.50" y1="114.35" x2="945.70" y2="114.35" stroke="#8a8a8a" stroke-width="0.5" />
<line x1="286.30" y1="10.50" x2="286.30" y2="64.00" stroke="#c6c6c6" stroke-width="0.7" />
<line x1="286.30" y1="0.60" x2="286.30" y2="10.50" stroke="#a0a0a0" stroke-width="0.7" />
<rect x="945.70" y="0.00" width="14.30" height="416.00" fill="#F1F1F1" />
<rect x="945.50" y="0.00" width="1.60" height="416.00" fill="#F7F7F7" />
<rect x="950.40" y="-4.00" width="6.40" height="8.60" fill="#6f6f6f" rx="2.8"/>
<polygon points="949.8,406.9 956.6,406.9 953.2,412.0" fill="#666666"/>
<rect x="0.00" y="414.80" width="960.00" height="1.20" fill="#EBEBEB" />
</svg>
</body></html>
